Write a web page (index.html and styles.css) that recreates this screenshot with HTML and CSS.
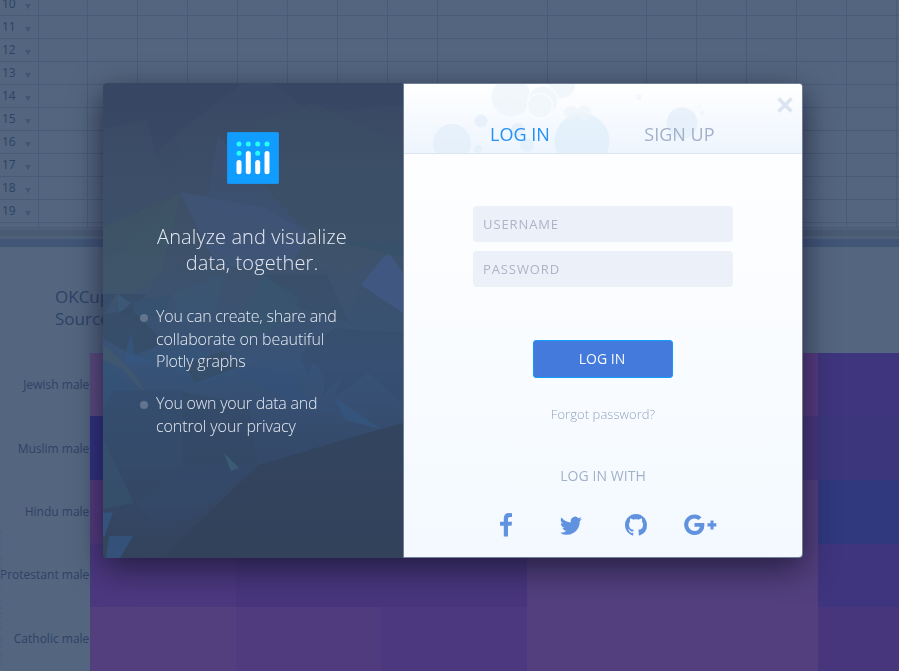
FILE: index.html
```
<!DOCTYPE html>
<html lang="en">
<head>
<meta charset="utf-8">
<title>Log in</title>
<link rel="stylesheet" href="styles.css">
</head>
<body>
<div class="workspace">
  <div class="sheet">
    <div class="row-numbers">
      <div class="num">10<i></i></div><div class="num">11<i></i></div><div class="num">12<i></i></div><div class="num">13<i></i></div><div class="num">14<i></i></div><div class="num">15<i></i></div><div class="num">16<i></i></div><div class="num">17<i></i></div><div class="num">18<i></i></div><div class="num">19<i></i></div>
    </div>
    <div class="cells"><u></u><u></u><u></u><u></u><u></u><u></u><u></u><u></u><u></u><u></u><u></u><u></u><u></u><u></u><u></u></div>
  </div>
  <div class="scrollbar"></div>
  <div class="splitter"></div>
  <div class="chart">
    <div class="y-title">ck to enter Y axis title</div>
    <div class="chart-title">OKCup<br>Source</div>
    <div class="plot">
      <div class="labels"><span>Jewish male</span><span>Muslim male</span><span>Hindu male</span><span>Protestant male</span><span>Catholic male</span></div>
      <div class="heat">
        <b class="a"></b><b class="p"></b><b class="p"></b><b class="p"></b><b class="m"></b><b class="i"></b>
        <b class="n"></b><b class="p"></b><b class="p"></b><b class="p"></b><b class="v"></b><b class="j"></b>
        <b class="q"></b><b class="p"></b><b class="p"></b><b class="p"></b><b class="p"></b><b class="n2"></b>
        <b class="r"></b><b class="v"></b><b class="v"></b><b class="p"></b><b class="p"></b><b class="i"></b>
        <b class="p"></b><b class="s"></b><b class="r"></b><b class="p"></b><b class="p"></b><b class="v"></b>
      </div>
    </div>
  </div>
</div>
<div class="overlay">
  <div class="modal">
    <section class="intro">
      <svg class="facets" viewBox="0 0 300 475" preserveAspectRatio="none">
        <defs>
          <linearGradient id="base" x1="0" y1="0" x2="0" y2="1"><stop offset="0" stop-color="#394864"/><stop offset=".2" stop-color="#3c4e67"/><stop offset=".42" stop-color="#3d526d"/><stop offset=".6" stop-color="#385378"/><stop offset=".75" stop-color="#354b6c"/><stop offset="1" stop-color="#33435d"/></linearGradient>
        </defs>
        <rect width="300" height="475" fill="url(#base)"/>
        <g opacity=".7">
        <g fill="#374664" opacity=".7"><path d="M0 0H140L75 49L44 36L0 46Z" opacity=".5"/><path d="M44 36L74 49L53 72Z"/><path d="M172 0H300V22L206 30Z" opacity=".5"/></g>
        <g fill="#3c5564" opacity=".3"><path d="M0 144L77 111L58 190L0 228Z" fill="#45605f"/><path d="M53 72L75 51V104Z"/><path d="M120 49L210 20L300 60V158L232 160L206 150L160 105Z"/></g>
        <path d="M77 109L160 124L206 150L190 179L120 185L104 165Z" fill="#42597f" opacity=".8"/>
        <path d="M115 52L160 103L206 150L102 126Z" fill="#3f5579" opacity=".6"/>
        <path d="M77 109L102 165L58 190L45 211H0V185Z" fill="#41586a" opacity=".3"/>
        <path d="M206 150L290 170L247 191L190 179Z" fill="#42556c" opacity=".5"/>
        <path d="M232 158L300 160V175L282 170Z" fill="#365269" opacity=".8"/>
        <path d="M247 191L287 171L300 190V230L258 202Z" fill="#425b8a"/>
        <path d="M247 191L282 172L258 202Z" fill="#3e5370"/>
        <path d="M258 202L300 230V257L246 240Z" fill="#395270" opacity=".8"/>
        <path d="M160 192L224 192L246 240L195 224Z" fill="#364d67" opacity=".7"/>
        <path d="M160 192L195 214L190 238L132 260Z" fill="#36576e" opacity=".7"/>
        <path d="M0 211L43 211L30 231L14 230V211L0 232Z" fill="#364d68"/>
        <path d="M14 211L28 220L15 232Z" fill="#426080" opacity=".7"/>
        <path d="M30 219L69 211L62 230L32 241Z" fill="#365170"/>
        <path d="M69 211L120 190L115 225L79 242Z" fill="#38587a" opacity=".5"/>
        <path d="M0 232L28 226L62 260L30 273L0 255Z" fill="#354960" opacity=".7"/>
        <path d="M28 249L31 271L55 280L20 281Z" fill="#365985" opacity=".75"/>
        <path d="M30 273L90 260L133 290L94 301L62 279Z" fill="#34567b" opacity=".7"/>
        <path d="M80 282L120 268L141 282L92 300Z" fill="#34495d" opacity=".7"/>
        <path d="M133 290L150 282L188 290L203 314L246 334L278 346L170 310Z" fill="#345179" opacity=".7"/>
        <path d="M197 272L205 292L211 279L222 296L220 313L240 292L231 314L265 290L300 320V250L232 245Z" fill="#334867" opacity=".5"/>
        <path d="M231 314L278 346L242 337Z" fill="#345985" opacity=".85"/>
        <path d="M0 262C20 276 35 294 43 310L33 302Q20 282 0 277Z" fill="#4a5e66" opacity=".6"/>
        <path d="M0 278L30 305L10 314L0 335Z" fill="#345277"/>
        <path d="M10 308L80 306L105 338L78 384H0V330Z" fill="#344c6b" opacity=".8"/>
        <path d="M79 309L145 320L155 382L80 382Z" fill="#344862" opacity=".6"/>
        <path d="M155 382L278 346L300 340V475H60L90 445Z" fill="#33425a"/>
        <path d="M0 355L31 420L0 426Z" fill="#385570" opacity=".7"/>
        <path d="M78 384L155 382L87 437L49 438L31 420Z" fill="#354a6b" opacity=".7"/>
        <path d="M121 370L136 385L128 388Z" fill="#3d6478"/>
        <path d="M0 430L10 429L2 453H0Z" fill="#355985"/>
        <path d="M5 453H30L17 475H0Z" fill="#355985"/>
        <path d="M0 453H6L3 475H0Z" fill="#34485c"/>
        </g>
      </svg>
      <div class="intro-content">
        <svg class="logo" width="52" height="52" viewBox="0 0 52 52"><rect width="52" height="52" rx="2.500" fill="#119dff" stroke="#2487d6"/><g fill="#25fef7"><circle cx="12" cy="12" r="2.5"/><circle cx="21.3" cy="12" r="2.5"/><circle cx="30.7" cy="12" r="2.5"/><circle cx="40" cy="12" r="2.5"/><circle cx="12" cy="21.3" r="2.5"/><circle cx="30.7" cy="21.3" r="2.5"/></g><g fill="#fff"><rect x="9.5" y="28" width="5" height="14.3" rx="2.5"/><rect x="18.8" y="19" width="5" height="23.3" rx="2.5"/><rect x="28.2" y="28" width="5" height="14.3" rx="2.5"/><rect x="37.5" y="19" width="5" height="23.3" rx="2.5"/></g></svg>
        <h1>Analyze and visualize<br>data, together.</h1>
        <ul>
          <li>You can create, share and<br><span>collaborate on beautiful</span><br>Plotly graphs</li>
          <li>You own your data and<br><span>control your privacy</span></li>
        </ul>
      </div>
    </section>
    <section class="account">
      <header>
        <svg class="bubbles" width="398" height="69" viewBox="0 0 398 69">
          <g fill="#e1edf9" fill-opacity=".65"><circle cx="48" cy="59" r="19"/><circle cx="77" cy="37" r="6.5"/><circle cx="74" cy="65" r="4"/><circle cx="114" cy="46" r="7"/><circle cx="123" cy="61" r="7"/><circle cx="178" cy="57" r="27.5" fill="#dcecf9"/><circle cx="278" cy="39" r="15.5"/></g>
          <g fill="#edf4fa" fill-opacity=".75"><circle cx="107" cy="13" r="19.5"/><circle cx="158" cy="1" r="13"/><circle cx="167" cy="29" r="7"/><circle cx="180" cy="29" r="7.500"/><circle cx="235" cy="13" r="2.700"/><circle cx="298" cy="29" r="2.200"/><circle cx="296" cy="22" r="1"/></g>
          <g fill="#f1f7fb" stroke="#fafcfe" stroke-width="1.500"><circle cx="139" cy="17" r="15"/><circle cx="136" cy="22" r="12.500"/></g>
        </svg>
        <nav><a class="active">LOG IN</a><a>SIGN UP</a></nav>
        <svg class="close" width="16" height="16" viewBox="0 0 16 16"><path d="M1.500 1.500L14.500 14.500M14.500 1.500L1.500 14.500" stroke="#dbe5f1" stroke-width="3.700"/></svg>
      </header>
      <form>
        <input type="text" placeholder="USERNAME">
        <input type="password" placeholder="PASSWORD">
        <button type="button">LOG IN</button>
        <a class="forgot">Forgot password?</a>
        <p>LOG IN WITH</p>
        <div class="social">
          <svg width="12" height="24" viewBox="0 0 12 24"><path d="M12 .3V4H9.800Q8 4 8 5.800V8.700H12L11.500 12.700H8V23.500H3.800V12.700H0V8.700H3.800V5.600Q3.800 0 9 0Q11 0 12 .3Z"/></svg>
          <svg width="22" height="19" viewBox="0 1.500 24 20.500" preserveAspectRatio="none"><path d="M24 4.600a10 10 0 0 1-2.800.8 5 5 0 0 0 2.100-2.700 10 10 0 0 1-3.100 1.200 4.900 4.900 0 0 0-8.400 4.500A14 14 0 0 1 1.700 3.100a4.900 4.900 0 0 0 1.500 6.600 5 5 0 0 1-2.200-.6 4.900 4.900 0 0 0 3.900 4.900 5 5 0 0 1-2.200.1 4.900 4.900 0 0 0 4.600 3.400A9.900 9.900 0 0 1 0 19.500a14 14 0 0 0 21.500-12.400A10 10 0 0 0 24 4.600Z"/></svg>
          <svg width="22" height="22" viewBox="0 0 16 16"><path fill-rule="evenodd" d="M8 0C3.580 0 0 3.580 0 8c0 3.540 2.290 6.530 5.470 7.590.4.070.55-.17.55-.38 0-.19-.01-.82-.01-1.490-2.010.37-2.530-.49-2.690-.94-.09-.23-.48-.94-.82-1.130-.28-.15-.68-.52-.01-.53.63-.01 1.080.58 1.230.82.72 1.210 1.870.87 2.330.66.070-.52.280-.87.510-1.070-1.780-.2-3.640-.89-3.640-3.950 0-.87.310-1.590.82-2.150-.08-.2-.36-1.020.08-2.120 0 0 .67-.21 2.200.82.640-.18 1.320-.27 2-.27s1.360.09 2 .27c1.530-1.040 2.200-.82 2.200-.82.440 1.100.160 1.920.08 2.120.51.560.82 1.270.82 2.150 0 3.070-1.870 3.750-3.650 3.950.29.250.54.730.54 1.480 0 1.070-.01 1.930-.01 2.200 0 .21.150.46.550.38A8 8 0 0 0 16 8c0-4.420-3.580-8-8-8Z"/></svg>
          <svg width="34" height="22" viewBox="0 0 34 22"><path d="M10.500 9H20.200Q21 14 18.200 17.500Q15.300 21 10.500 21A10.300 10.300 0 1 1 17.500 3.200L14.500 6A6.200 6.200 0 1 0 10.500 16.900Q15 16.900 15.900 12.700H10.500ZM26.500 6.500H29.500V9.300H32.300V12.500H29.500V15.500H26.500V12.500H23.500V9.300H26.500Z"/></svg>
        </div>
      </form>
    </section>
  </div>
</div>
</body>
</html>
```
FILE: styles.css
```
* { box-sizing: border-box; }
body { margin: 0; width: 899px; height: 671px; overflow: hidden; font-family: "Open Sans", sans-serif; background: #54667f; }
.workspace { height: 671px; overflow: hidden; color: #2d4266; }
.sheet { display: flex; height: 228px; border-bottom: 1px solid #495b76; overflow: hidden; }
.row-numbers { width: 39px; flex: none; border-right: 1px solid #495b76; margin-top: -7px; }
.num { height: 23px; border-bottom: 1px solid #495b76; display: flex; justify-content: space-between; padding: 0 7px 0 2px; font-size: 12px; line-height: 22px; }
.num i { border: 3px solid transparent; border-top: 5px solid #425572; border-bottom: 0; align-self: center; margin-top: 4px; }
.cells { flex: 1; display: grid; grid-template-columns: 49px repeat(7, 50px) 110px 99px repeat(5, 50px); background: repeating-linear-gradient(transparent 0 22px, #495b76 22px 23px) 0 -7px / 100% 253px; }
.cells u { border-right: 1px solid #495b76; }
.scrollbar { height: 11px; background: linear-gradient(#4f617a 2px, #495a73 2px 8px, #4f617a 8px); }
.splitter { height: 8px; background: #415677; }
.chart { height: 424px; position: relative; padding-top: 39px; }
.chart-title { margin-left: 55px; height: 67px; font-size: 17px; line-height: 22px; }
.y-title { position: absolute; left: -14px; top: 281px; writing-mode: vertical-rl; transform: rotate(180deg); font-size: 14px; line-height: 22px; color: #496080; white-space: nowrap; }
.plot { display: flex; height: 318px; }
.labels { width: 90px; flex: none; display: grid; grid-template-rows: repeat(5, 1fr); align-items: center; justify-items: end; padding: 0 1.500px 1px 0; font-size: 12px; white-space: nowrap; }
.heat { flex: 1; display: grid; grid-template-columns: repeat(5, 145.6px) 1fr; grid-template-rows: 63px 64px 64px 63px 64px; }
.a { background: #5c4b80; }
.p { background: #533f7e; }
.m { background: #573a80; }
.i { background: #3f357e; }
.n { background: #303181; }
.v { background: #48367d; }
.j { background: #3c377d; }
.q { background: #553b7e; }
.n2 { background: #30387e; }
.r { background: #4c387f; }
.s { background: #503b7e; }
.overlay { position: fixed; inset: 0; }
.modal { display: flex; width: 700px; height: 475px; margin: 83px 0 0 103px; border-radius: 4px; box-shadow: 0 10px 32px rgba(20, 20, 45, .75); }
.intro { width: 300px; flex: none; position: relative; overflow: hidden; border-radius: 4px 0 0 4px; color: #e3e9f0; font-weight: 300; }
.facets { position: absolute; width: 100%; height: 100%; }
.intro-content { position: relative; padding-top: 49px; }
.logo { display: block; margin: 0 auto 40px 124px; }
h1 { margin: 0 0 29px; padding-right: 2px; font-weight: 300; font-size: 20px; line-height: 26px; letter-spacing: .1px; text-align: center; }
ul { margin: 0; padding: 0 0 0 53px; list-style: none; font-size: 16px; line-height: 22.700px; letter-spacing: -.22px; }
li { position: relative; margin-bottom: 19px; white-space: nowrap; }
li span { letter-spacing: -.1px; }
li::before { content: ""; position: absolute; left: -16px; top: 9px; width: 8px; height: 8px; border-radius: 50%; background: #63758e; }
.account { flex: 1; border: 1px solid #718096; border-radius: 0 4px 4px 0; background: linear-gradient(#fff, #fcfdff 35%, #f3f9ff); overflow: hidden; }
header { height: 70px; position: relative; border-bottom: 1px solid #dce6f1; background: linear-gradient(#fff, #eef5fe); }
.bubbles { position: absolute; left: 0; top: 0; }
nav { position: relative; display: flex; justify-content: space-between; padding: 38px 87.500px 0 86px; font-size: 18px; line-height: 25px; color: #a2b1c9; }
nav .active { color: #2391f7; }
.close { position: absolute; right: 9px; top: 13px; }
form { display: flex; flex-direction: column; align-items: center; padding-top: 52px; }
input { width: 260px; height: 36px; margin: 0 0 9px; border: 0; border-radius: 4px; padding: 0 10px; background: #ecf0f9; font: 13px "Open Sans", sans-serif; letter-spacing: .9px; }
input::placeholder { color: #adb4c6; opacity: 1; }
button { width: 140px; height: 38px; margin-top: 44px; border: 1px solid #119dff; border-radius: 3px; padding: 0 2px 2px 0; color: #f5f8ff; background: #447adb; font: 14px "Open Sans", sans-serif; }
.forgot { margin-top: 27px; font-size: 13px; line-height: 18px; font-weight: 300; letter-spacing: .06px; color: #94a5c0; }
p { margin: 43px 0 0; font-size: 14px; line-height: 20px; letter-spacing: .06px; color: #a2b1c9; }
.social { display: flex; align-items: center; margin: 27px 0 0 12px; fill: #6092df; }
.social svg { flex: none; }
.social svg:nth-child(2) { margin-left: 48px; }
.social svg:nth-child(3) { margin-left: 43px; }
.social svg:nth-child(4) { margin-left: 37px; }
```
